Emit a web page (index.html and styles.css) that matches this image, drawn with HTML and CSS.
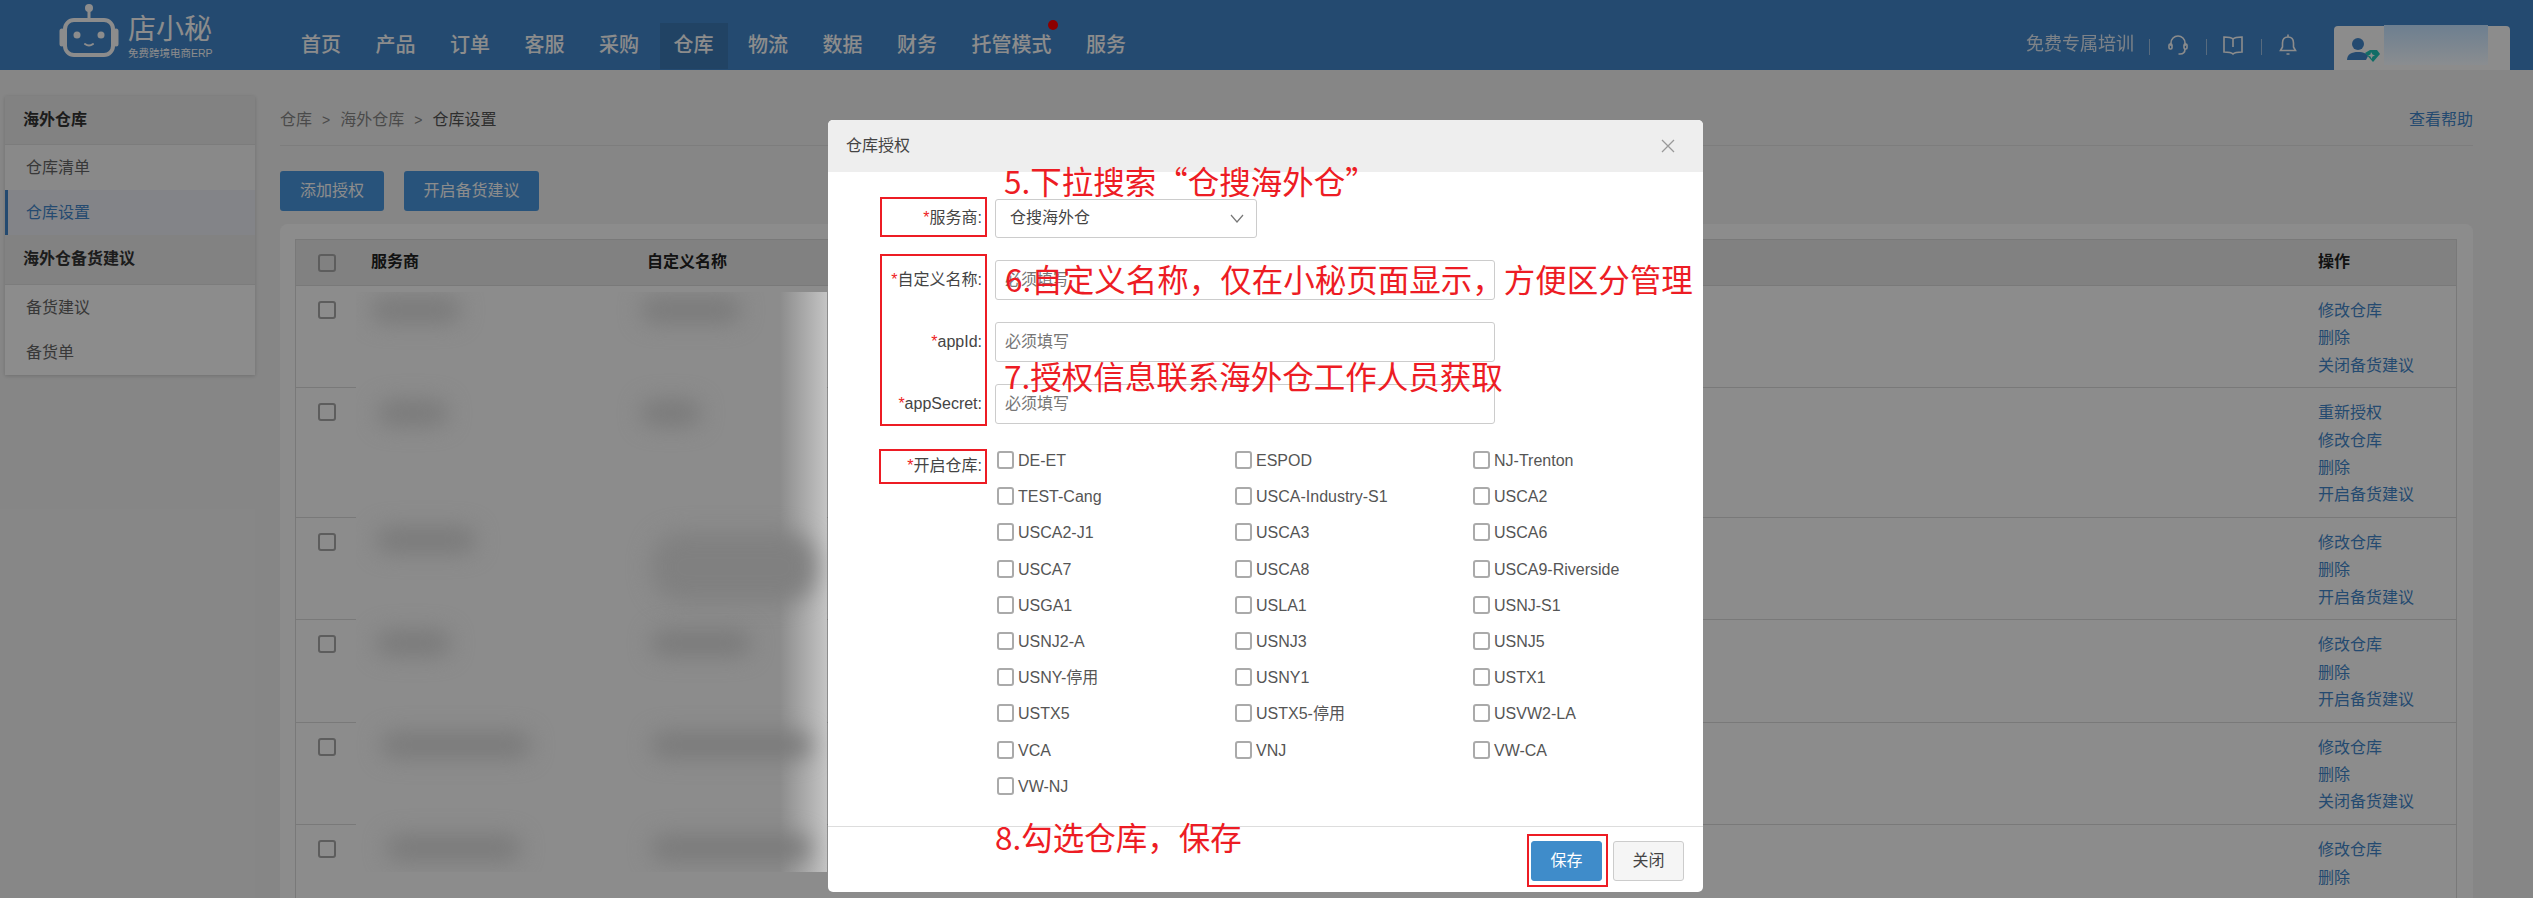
FILE: index.html
```html
<!DOCTYPE html>
<html lang="zh-CN">
<head>
<meta charset="utf-8">
<title>仓库设置</title>
<link rel="stylesheet" href="styles.css">
</head>
<body>
<header class="topbar">
  <div class="logo">
    <svg class="robot" width="62" height="60" viewBox="0 0 62 60" fill="none">
      <circle cx="31" cy="8" r="4" fill="#fff"/>
      <path d="M31 10v9" stroke="#fff" stroke-width="3"/>
      <rect x="7" y="20" width="48" height="35" rx="9" stroke="#fff" stroke-width="4"/>
      <path d="M4 31v13M58 31v13" stroke="#fff" stroke-width="5" stroke-linecap="round"/>
      <circle cx="19" cy="35" r="3.5" fill="#fff"/>
      <circle cx="43" cy="35" r="3.5" fill="#fff"/>
      <path d="M27 44q4 3 8 0" stroke="#fff" stroke-width="2" stroke-linecap="round"/>
    </svg>
    <div class="logo-text">
      <div class="logo-name">店小秘</div>
      <div class="logo-sub">免费跨境电商ERP</div>
    </div>
  </div>
  <nav class="nav">
    <a class="nav-item">首页</a>
    <a class="nav-item">产品</a>
    <a class="nav-item">订单</a>
    <a class="nav-item">客服</a>
    <a class="nav-item">采购</a>
    <a class="nav-item nav-active">仓库</a>
    <a class="nav-item">物流</a>
    <a class="nav-item">数据</a>
    <a class="nav-item">财务</a>
    <a class="nav-item">托管模式<i class="dot"></i></a>
    <a class="nav-item">服务</a>
  </nav>
  <div class="tools">
    <span class="training">免费专属培训</span>
    <i class="sep"></i>
    <svg class="tool" width="22" height="24" viewBox="0 0 22 24" fill="none" stroke="#fff" stroke-width="1.6"><path d="M4 13V10a7 7 0 0 1 14 0v3"/><rect x="2" y="11" width="3" height="5" rx="1.2"/><rect x="17" y="11" width="3" height="5" rx="1.2"/><path d="M18 16q0 5-5 5h-1.500"/></svg>
    <i class="sep"></i>
    <svg class="tool" width="22" height="24" viewBox="0 0 22 24" fill="none" stroke="#fff" stroke-width="1.6"><path d="M11 6C9 4 6 4 2 4v15c4 0 7 0 9 2 2-2 5-2 9-2V4c-4 0-7 0-9 2zM11 6v8"/></svg>
    <i class="sep"></i>
    <svg class="tool" width="22" height="24" viewBox="0 0 22 24" fill="none" stroke="#fff" stroke-width="1.6"><path d="M11 4c-4 0-5.500 3-5.500 6v4L3.500 17.500h15L16.500 14v-4c0-3-1.500-6-5.500-6zM11 1.500v2.500M9.500 21h3"/></svg>
    <div class="user">
      <svg width="34" height="32" viewBox="0 0 34 32"><circle cx="12" cy="10" r="6" fill="#4388cc"/><path d="M1 26c0-6 5-8 11-8s9 2 10 4l-2 4z" fill="#4388cc"/><path d="M19 19l5-3h7l3 4-7 8z" fill="#1fc7bb"/><path d="M25 18l1.500 2.500 2.500 1-2.500 1-1 2.500-1-2.500-2.500-1 2.500-1z" fill="#fff"/></svg>
    </div>
  </div>
</header>

<div class="page">
  <aside class="side">
    <div class="side-head">海外仓库</div>
    <a class="side-item">仓库清单</a>
    <a class="side-item side-active">仓库设置</a>
    <div class="side-head side-head-b">海外仓备货建议</div>
    <a class="side-item side-plain">备货建议</a>
    <a class="side-item side-plain">备货单</a>
  </aside>
  <main class="content">
    <div class="crumbs">
      <div class="crumb-path"><span>仓库</span><b>&gt;</b><span>海外仓库</span><b>&gt;</b><em>仓库设置</em></div>
      <a class="link">查看帮助</a>
    </div>
    <div class="actions">
      <button class="btn">添加授权</button>
      <button class="btn">开启备货建议</button>
    </div>
    <section class="panel">
      <div class="table">
        <div class="tr th">
          <i class="check"></i><span>服务商</span><span>自定义名称</span><span class="op">操作</span>
        </div>
        <div class="tr">
          <i class="check"></i><span></span><span></span>
          <div class="op links"><a>修改仓库</a><a>删除</a><a>关闭备货建议</a></div>
        </div>
        <div class="tr">
          <i class="check"></i><span></span><span></span>
          <div class="op links"><a>重新授权</a><a>修改仓库</a><a>删除</a><a>开启备货建议</a></div>
        </div>
        <div class="tr">
          <i class="check"></i><span></span><span></span>
          <div class="op links"><a>修改仓库</a><a>删除</a><a>开启备货建议</a></div>
        </div>
        <div class="tr">
          <i class="check"></i><span></span><span></span>
          <div class="op links"><a>修改仓库</a><a>删除</a><a>开启备货建议</a></div>
        </div>
        <div class="tr">
          <i class="check"></i><span></span><span></span>
          <div class="op links"><a>修改仓库</a><a>删除</a><a>关闭备货建议</a></div>
        </div>
        <div class="tr tr-last">
          <i class="check"></i><span></span><span></span>
          <div class="op links"><a>修改仓库</a><a>删除</a></div>
        </div>
      </div>
    </section>
  </main>
</div>

<div class="mask"></div>
<div class="name-blur"></div>

<div class="redact">
  <i class="blob b1"></i><i class="blob b2"></i>
  <i class="blob b3"></i><i class="blob b4"></i>
  <i class="blob b5"></i><i class="blob b6"></i>
  <i class="blob b7"></i><i class="blob b8"></i>
  <i class="blob b9"></i><i class="blob b10"></i>
  <i class="blob b11"></i><i class="blob b12"></i>
</div>

<div class="modal">
  <div class="modal-head">
    <span>仓库授权</span>
    <svg width="14" height="14" viewBox="0 0 14 14" fill="none" stroke="#999" stroke-width="1.3"><path d="M1 1l12 12M13 1L1 13"/></svg>
  </div>
  <form class="form">
    <div class="field">
      <label class="label"><s>*</s>服务商:</label>
      <div class="select">仓搜海外仓
        <svg width="14" height="9" viewBox="0 0 14 9" fill="none" stroke="#777" stroke-width="1.2"><path d="M1 1l6 7 6-7"/></svg>
      </div>
    </div>
    <div class="field field-input">
      <label class="label"><s>*</s>自定义名称:</label>
      <input class="input" placeholder="必须填写">
    </div>
    <div class="field field-input">
      <label class="label"><s>*</s>appId:</label>
      <input class="input" placeholder="必须填写">
    </div>
    <div class="field field-input">
      <label class="label"><s>*</s>appSecret:</label>
      <input class="input" placeholder="必须填写">
    </div>
    <div class="field field-checks">
      <label class="label label-checks"><s>*</s>开启仓库:</label>
      <div class="checks">
        <div class="opt"><i></i>DE-ET</div><div class="opt"><i></i>ESPOD</div><div class="opt"><i></i>NJ-Trenton</div>
        <div class="opt"><i></i>TEST-Cang</div><div class="opt"><i></i>USCA-Industry-S1</div><div class="opt"><i></i>USCA2</div>
        <div class="opt"><i></i>USCA2-J1</div><div class="opt"><i></i>USCA3</div><div class="opt"><i></i>USCA6</div>
        <div class="opt"><i></i>USCA7</div><div class="opt"><i></i>USCA8</div><div class="opt"><i></i>USCA9-Riverside</div>
        <div class="opt"><i></i>USGA1</div><div class="opt"><i></i>USLA1</div><div class="opt"><i></i>USNJ-S1</div>
        <div class="opt"><i></i>USNJ2-A</div><div class="opt"><i></i>USNJ3</div><div class="opt"><i></i>USNJ5</div>
        <div class="opt"><i></i>USNY-停用</div><div class="opt"><i></i>USNY1</div><div class="opt"><i></i>USTX1</div>
        <div class="opt"><i></i>USTX5</div><div class="opt"><i></i>USTX5-停用</div><div class="opt"><i></i>USVW2-LA</div>
        <div class="opt"><i></i>VCA</div><div class="opt"><i></i>VNJ</div><div class="opt"><i></i>VW-CA</div>
        <div class="opt"><i></i>VW-NJ</div>
      </div>
    </div>
  </form>
  <div class="modal-foot">
    <button class="mbtn mbtn-save">保存</button>
    <button class="mbtn">关闭</button>
  </div>

  <div class="note n5">5.下拉搜索“仓搜海外仓”</div>
  <div class="note n6">6.自定义名称，仅在小秘页面显示，方便区分管理</div>
  <div class="note n7">7.授权信息联系海外仓工作人员获取</div>
  <div class="note n8">8.勾选仓库，保存</div>
  <i class="rbox r1"></i>
  <i class="rbox r2"></i>
  <i class="rbox r3"></i>
  <i class="rbox r4"></i>
</div>
</body>
</html>
```

FILE: styles.css
```css
* { box-sizing: border-box; }
html, body { margin: 0; height: 100%; }
body {
  height: 898px;
  overflow: hidden;
  position: relative;
  background: #f5f5f5;
  font: 16px/1.4 "Liberation Sans", "Noto Sans CJK SC", sans-serif;
  color: #333;
}
a { color: inherit; text-decoration: none; }
i, em, s { font-style: normal; text-decoration: none; }

/* top bar */
.topbar {
  height: 70px;
  background: #4388cc;
  display: flex;
  align-items: flex-end;
  color: #fff;
}
.logo { width: 287px; height: 70px; display: flex; padding-left: 58px; gap: 8px; }
.logo-text { margin-top: 14px; }
.logo-name { font-size: 28px; line-height: 32px; width: 84px; }
.logo-sub { font-size: 10.500px; line-height: 14px; white-space: nowrap; }
.nav { display: flex; gap: 6.500px; margin-bottom: 1px; }
.nav-item {
  position: relative;
  height: 46px;
  padding: 0 14px;
  font-size: 20px;
  font-weight: 500;
  line-height: 44px;
  white-space: nowrap;
}
.nav-active { background: rgba(0, 0, 0, .1); }
.dot {
  position: absolute;
  top: -3px;
  right: 8px;
  width: 10px;
  height: 10px;
  border-radius: 50%;
  background: #f00;
}
.tools { margin-left: auto; margin-right: 23px; display: flex; align-items: flex-start; height: 70px; }
.training { font-size: 18px; line-height: 24px; margin-top: 32px; color: #fff; opacity: .85; }
.sep { width: 1px; height: 16px; background: rgba(255, 255, 255, .5); margin-top: 39px; }
.training + .sep { margin-left: 15px; }
.tool { margin: 33px 17px 0; }
.tool + .sep + .tool { margin-left: 15px; }
.user {
  width: 176px;
  height: 44px;
  margin: 26px 0 0 18px;
  padding: 8px 0 0 12px;
  background: #fff;
  border-radius: 4px 4px 0 0;
}
.user svg { display: block; }

/* page */
.page { display: flex; align-items: flex-start; padding: 26px 60px 0 5px; gap: 25px; }
.side { width: 250px; flex: none; background: #fff; box-shadow: 0 1px 4px rgba(0, 0, 0, .18); }
.side-head {
  height: 49px;
  padding-left: 18px;
  line-height: 48px;
  font-weight: 700;
  background: #ededed;
  border-bottom: 1px solid #e2e2e2;
}
.side-head-b { height: 50px; }
.side-item {
  display: block;
  height: 45px;
  padding-left: 21px;
  line-height: 45px;
  color: #666;
  background: #fafafa;
}
.side-plain { background: #fff; }
.side-active {
  color: #4388cc;
  background: #eef1f8;
  border-left: 3px solid #4388cc;
  padding-left: 18px;
}

.content { flex: 1; min-width: 0; }
.crumbs {
  height: 50px;
  display: flex;
  justify-content: space-between;
  line-height: 48px;
  border-bottom: 1px solid #e3e3e3;
}
.crumb-path { color: #888; display: flex; }
.crumb-path b { font-weight: 400; margin: 0 10px; font-size: 14px; }
.crumb-path em { color: #555; }
.link { color: #4388cc; }

.actions { display: flex; gap: 20px; margin-top: 25px; }
.btn {
  height: 40px;
  padding: 0 20px;
  border: 0;
  border-radius: 3px;
  background: #4a98e0;
  color: #fff;
  font: inherit;
}
.btn + .btn { padding: 0 19.500px; }

.panel {
  margin-top: 13px;
  height: 674px;
  padding: 15px 16px 0 15px;
  background: #fff;
  border-radius: 8px 8px 0 0;
}
.table { border: 1px solid #ddd; border-bottom: 0; height: 100%; }
.tr {
  display: grid;
  grid-template-columns: 75px 276px 1fr 138px;
  border-bottom: 1px solid #ddd;
  padding: 11px 0 8.500px;
}
.tr-last { border-bottom: 0; }
.th {
  height: 46px;
  padding: 0;
  align-items: center;
  font-weight: 700;
  color: #222;
  background: #ebebeb;
}
.check {
  width: 18px;
  height: 18px;
  margin: 4px 0 0 22px;
  border: 2px solid #aaa;
  border-radius: 3px;
}
.th .check { margin-top: 0; }
.links { display: flex; flex-direction: column; }
.links a { color: #4388cc; line-height: 27.300px; white-space: nowrap; }

/* dim layer */
.mask { position: absolute; inset: 0; background: rgba(0, 0, 0, .45); }
.name-blur {
  position: absolute;
  left: 2384px;
  top: 25px;
  width: 104px;
  height: 40px;
  background: linear-gradient(#6d7f90, #8a8d90);
}
.redact {
  position: absolute;
  left: 356px;
  top: 292px;
  width: 471px;
  height: 580px;
  overflow: hidden;
  background: linear-gradient(to right, #8c8c8c 90%, #c4c4c4 100%);
}
.blob {
  position: absolute;
  height: 26px;
  border-radius: 13px;
  background: #7a7a7a;
  filter: blur(11px);
}
.b1 { left: 15px; top: 5px; width: 90px; }
.b2 { left: 285px; top: 5px; width: 100px; }
.b3 { left: 22px; top: 108px; width: 70px; }
.b4 { left: 285px; top: 108px; width: 60px; }
.b5 { left: 20px; top: 235px; width: 100px; }
.b6 { left: 295px; top: 240px; width: 165px; height: 70px; border-radius: 30px; background: #808080; }
.b7 { left: 20px; top: 338px; width: 75px; }
.b8 { left: 295px; top: 338px; width: 100px; }
.b9 { left: 25px; top: 440px; width: 150px; }
.b10 { left: 295px; top: 440px; width: 160px; }
.b11 { left: 30px; top: 543px; width: 135px; }
.b12 { left: 295px; top: 543px; width: 160px; }

/* modal */
.modal {
  position: absolute;
  left: 828px;
  top: 120px;
  width: 875px;
  height: 772px;
  display: flex;
  flex-direction: column;
  background: #fff;
  border-radius: 5px;
}
.modal-head {
  height: 52px;
  flex: none;
  display: flex;
  align-items: center;
  justify-content: space-between;
  padding: 0 28px 0 18px;
  background: #eee;
  border-radius: 5px 5px 0 0;
  color: #444;
}
.form { flex: 1; padding-top: 27px; }
.field { display: flex; align-items: center; height: 39px; }
.field-input { height: 40px; margin-top: 22px; }
.field-checks { height: auto; align-items: flex-start; margin-top: 27px; }
.label { width: 154px; flex: none; text-align: right; color: #444; white-space: nowrap; margin-right: 13px; }
.label s { color: #e22; }
.label-checks { margin-top: 4px; }
.select {
  width: 262px;
  height: 39px;
  padding: 0 12px 0 14px;
  display: flex;
  align-items: center;
  justify-content: space-between;
  border: 1px solid #ccc;
  border-radius: 3px;
  color: #444;
}
.input {
  width: 500px;
  height: 40px;
  padding: 0 9px;
  border: 1px solid #ccc;
  border-radius: 3px;
  font: inherit;
  outline: 0;
}
.input::placeholder { color: #777; opacity: 1; }
.checks {
  margin-left: 2px;
  display: grid;
  grid-template-columns: repeat(3, 238px);
  grid-auto-rows: 36.200px;
}
.opt { display: flex; align-items: flex-start; gap: 4px; color: #555; line-height: 20px; white-space: nowrap; }
.opt i {
  width: 17px;
  height: 18px;
  border: 2px solid #aaa;
  border-radius: 3px;
}
.modal-foot {
  height: 66px;
  flex: none;
  display: flex;
  justify-content: flex-end;
  gap: 11px;
  padding: 14px 19px 0 0;
  border-top: 1px solid #ddd;
}
.mbtn {
  width: 71px;
  height: 40px;
  border: 1px solid #ccc;
  border-radius: 3px;
  background: #f5f5f5;
  color: #444;
  font: inherit;
}
.mbtn-save { border-color: #3f8cca; background: #3f8cca; color: #fff; }

/* annotations over the dialog */
.note {
  position: absolute;
  font-size: 31.500px;
  line-height: 30px;
  color: #ed1c24;
  white-space: nowrap;
  font-family: "Noto Sans CJK SC", sans-serif;
}
.n5 { left: 176px; top: 45px; }
.n6 { left: 177px; top: 143px; }
.n7 { left: 176px; top: 240px; }
.n8 { left: 167px; top: 701px; }
.rbox { position: absolute; border: 2px solid #ed1c24; }
.r1 { left: 52px; top: 77px; width: 107px; height: 40px; }
.r2 { left: 52px; top: 134px; width: 107px; height: 172px; }
.r3 { left: 51px; top: 329px; width: 108px; height: 35px; }
.r4 { left: 699px; top: 714px; width: 81px; height: 53px; }
```
